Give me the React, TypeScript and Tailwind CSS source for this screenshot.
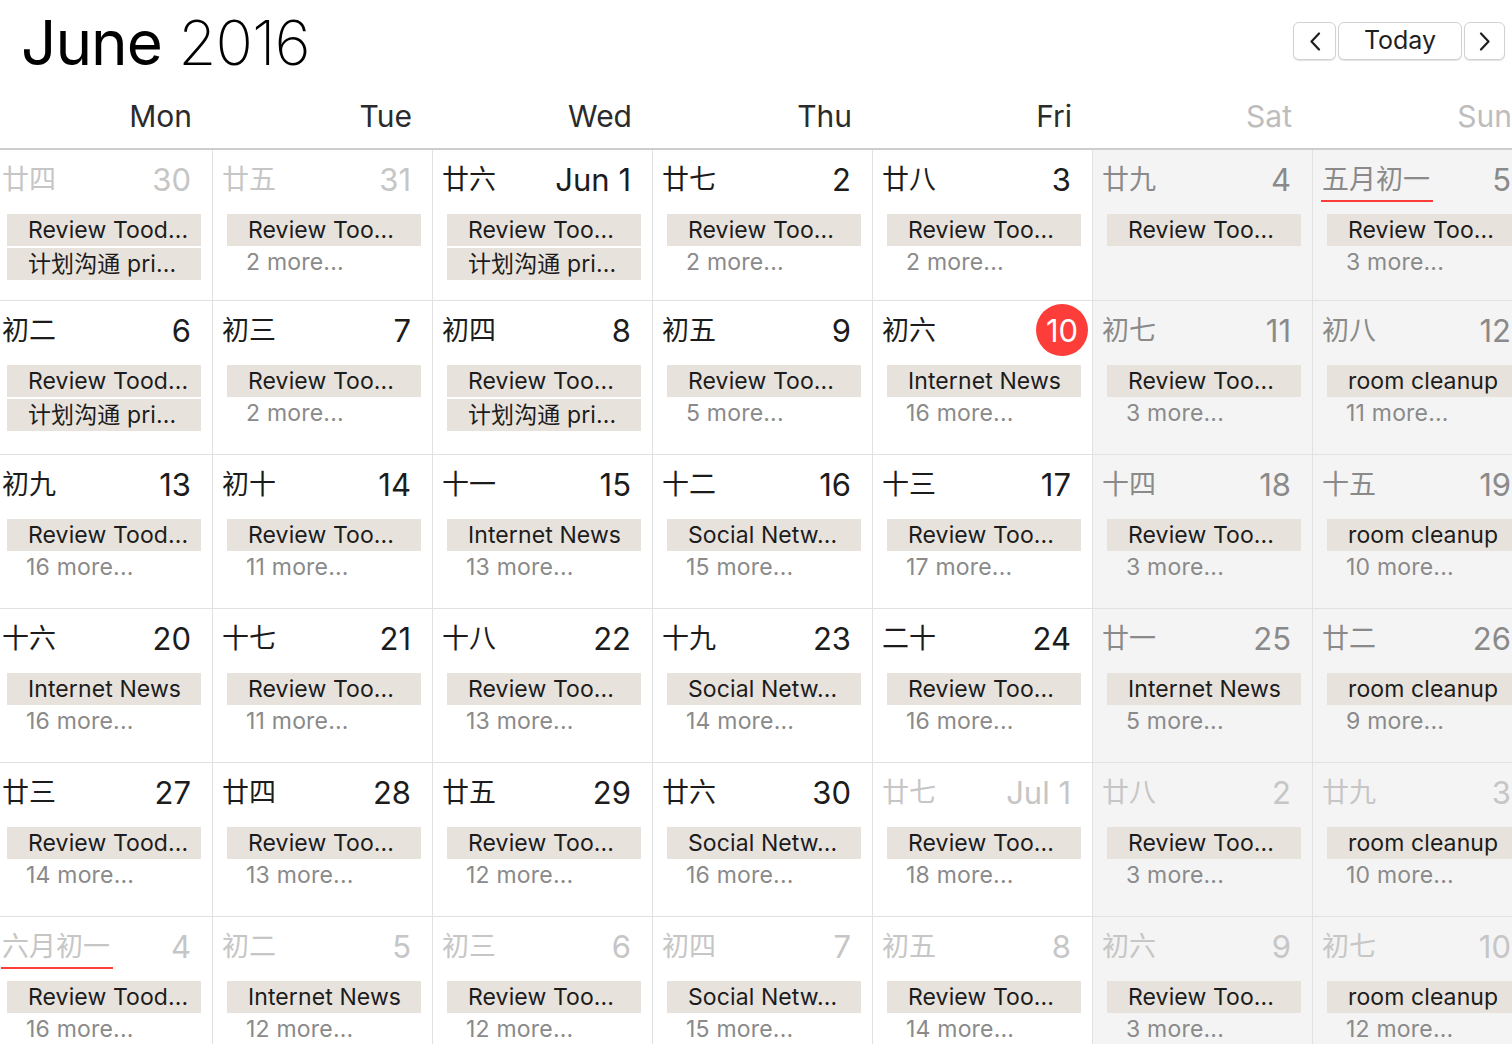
import React from "react";

type Day = {
  lunar: string;
  num: string;
  out?: boolean;
  mark?: boolean;
  today?: boolean;
  events: string[];
  more?: string;
};

const d = (lunar: string, num: string, events: string[], more?: string, opts: Partial<Day> = {}): Day => ({
  lunar,
  num,
  events,
  more,
  ...opts,
});

const WEEKDAYS = ["Mon", "Tue", "Wed", "Thu", "Fri", "Sat", "Sun"];

const ROWS: Day[][] = [
  [
    d("廿四", "30", ["Review Tood...", "计划沟通 pri..."], undefined, { out: true }),
    d("廿五", "31", ["Review Too..."], "2 more...", { out: true }),
    d("廿六", "Jun 1", ["Review Too...", "计划沟通 pri..."]),
    d("廿七", "2", ["Review Too..."], "2 more..."),
    d("廿八", "3", ["Review Too..."], "2 more..."),
    d("廿九", "4", ["Review Too..."]),
    d("五月初一", "5", ["Review Too..."], "3 more...", { mark: true }),
  ],
  [
    d("初二", "6", ["Review Tood...", "计划沟通 pri..."]),
    d("初三", "7", ["Review Too..."], "2 more..."),
    d("初四", "8", ["Review Too...", "计划沟通 pri..."]),
    d("初五", "9", ["Review Too..."], "5 more..."),
    d("初六", "10", ["Internet News"], "16 more...", { today: true }),
    d("初七", "11", ["Review Too..."], "3 more..."),
    d("初八", "12", ["room cleanup"], "11 more..."),
  ],
  [
    d("初九", "13", ["Review Tood..."], "16 more..."),
    d("初十", "14", ["Review Too..."], "11 more..."),
    d("十一", "15", ["Internet News"], "13 more..."),
    d("十二", "16", ["Social Netw..."], "15 more..."),
    d("十三", "17", ["Review Too..."], "17 more..."),
    d("十四", "18", ["Review Too..."], "3 more..."),
    d("十五", "19", ["room cleanup"], "10 more..."),
  ],
  [
    d("十六", "20", ["Internet News"], "16 more..."),
    d("十七", "21", ["Review Too..."], "11 more..."),
    d("十八", "22", ["Review Too..."], "13 more..."),
    d("十九", "23", ["Social Netw..."], "14 more..."),
    d("二十", "24", ["Review Too..."], "16 more..."),
    d("廿一", "25", ["Internet News"], "5 more..."),
    d("廿二", "26", ["room cleanup"], "9 more..."),
  ],
  [
    d("廿三", "27", ["Review Tood..."], "14 more..."),
    d("廿四", "28", ["Review Too..."], "13 more..."),
    d("廿五", "29", ["Review Too..."], "12 more..."),
    d("廿六", "30", ["Social Netw..."], "16 more..."),
    d("廿七", "Jul 1", ["Review Too..."], "18 more...", { out: true }),
    d("廿八", "2", ["Review Too..."], "3 more...", { out: true }),
    d("廿九", "3", ["room cleanup"], "10 more...", { out: true }),
  ],
  [
    d("六月初一", "4", ["Review Tood..."], "16 more...", { out: true, mark: true }),
    d("初二", "5", ["Internet News"], "12 more...", { out: true }),
    d("初三", "6", ["Review Too..."], "12 more...", { out: true }),
    d("初四", "7", ["Social Netw..."], "15 more...", { out: true }),
    d("初五", "8", ["Review Too..."], "14 more...", { out: true }),
    d("初六", "9", ["Review Too..."], "3 more...", { out: true }),
    d("初七", "10", ["room cleanup"], "12 more...", { out: true }),
  ],
];

const Chevron = ({ dir }: { dir: "left" | "right" }) => (
  <svg width="12" height="19" viewBox="0 0 12 19" fill="none">
    <polyline
      points={dir === "left" ? "10,1.5 2.5,9.5 10,17.5" : "2,1.5 9.5,9.5 2,17.5"}
      stroke="#1f1f1f"
      strokeWidth="2.2"
      strokeLinecap="round"
      strokeLinejoin="round"
    />
  </svg>
);

const Cell = ({ day, weekend, first }: { day: Day; weekend: boolean; first: boolean }) => {
  const textColor = day.out ? "text-[#c6c6c6]" : weekend ? "text-[#8a8a8a]" : "text-[#1c1c1c]";
  return (
    <div
      className={`flex flex-col border-r border-b border-[#e1e1e1] ${first ? "h-[151px]" : "h-[154px]"} ${
        weekend ? "bg-[#f4f4f4]" : "bg-white"
      }`}
    >
      {/* date header: lunar day + solar day */}
      <div className="mt-[10px] flex h-[38px] items-center justify-between pl-[9px] pr-[21px]">
        <span className={`relative text-[27px] leading-none ${textColor}`}>
          {day.lunar}
          {day.mark && <span className="absolute left-[-1px] right-[-3px] top-[34px] h-[2px] bg-[#fc3d39]" />}
        </span>
        {day.today ? (
          <span className="mr-[-17px] flex h-[52px] w-[52px] items-center justify-center rounded-full bg-[#fc3d39] text-[31px] leading-none text-white">
            {day.num}
          </span>
        ) : (
          <span className={`text-[31px] leading-none ${textColor}`}>{day.num}</span>
        )}
      </div>
      {/* events */}
      <div className="mt-[16px] flex flex-col gap-[2px] pl-[14px] pr-[11px]">
        {day.events.map((ev, i) => (
          <div
            key={i}
            className="flex h-[32px] items-center whitespace-nowrap bg-[#e8e2dc] pl-[21px] text-[23px] leading-none tracking-[0.1px] text-[#1c1c1c]"
          >
            {ev}
          </div>
        ))}
        {day.more && (
          <div className="flex h-[28px] items-center whitespace-nowrap pl-[19px] text-[23px] leading-none tracking-[0.2px] text-[#8a8a8a]">
            {day.more}
          </div>
        )}
      </div>
    </div>
  );
};

export default function App() {
  return (
    <div className="h-[1044px] w-[1512px] overflow-hidden bg-white font-[Inter,'Noto_Sans_CJK_SC',sans-serif]">
      {/* Title bar */}
      <div className="flex h-[90px] items-start justify-between">
        <h1 className="mt-[12px] pl-[21px] text-[62px] leading-none tracking-[-1px] text-black">
          <span className="font-normal">June</span> <span className="font-extralight">2016</span>
        </h1>
        <div className="mt-[22px] mr-[7px] flex gap-[2px]">
          <button className="flex h-[38px] w-[43px] items-center justify-center rounded-[6px] border border-[#d2d2d2] bg-white shadow-[0_1px_1px_rgba(0,0,0,0.12)]">
            <Chevron dir="left" />
          </button>
          <button className="flex h-[38px] w-[124px] items-center justify-center rounded-[6px] border border-[#d2d2d2] bg-white text-[25px] text-[#1f1f1f] shadow-[0_1px_1px_rgba(0,0,0,0.12)]">
            Today
          </button>
          <button className="flex h-[38px] w-[41px] items-center justify-center rounded-[6px] border border-[#d2d2d2] bg-white shadow-[0_1px_1px_rgba(0,0,0,0.12)]">
            <Chevron dir="right" />
          </button>
        </div>
      </div>

      {/* Weekday header */}
      <div className="ml-[-7px] grid h-[60px] grid-cols-[repeat(7,220px)] border-b-2 border-[#cdcdcd]">
        {WEEKDAYS.map((w, i) => (
          <div
            key={w}
            className={`flex items-center justify-end pr-[21px] pb-[6px] text-[30px] ${
              i >= 5 ? "text-[#bdbdbd]" : "text-[#2b2b2b]"
            }`}
          >
            {w}
          </div>
        ))}
      </div>

      {/* Month grid */}
      <div className="ml-[-7px] grid grid-cols-[repeat(7,220px)]">
        {ROWS.map((row, r) =>
          row.map((day, c) => <Cell key={`${r}-${c}`} day={day} weekend={c >= 5} first={r === 0} />)
        )}
      </div>
    </div>
  );
}
